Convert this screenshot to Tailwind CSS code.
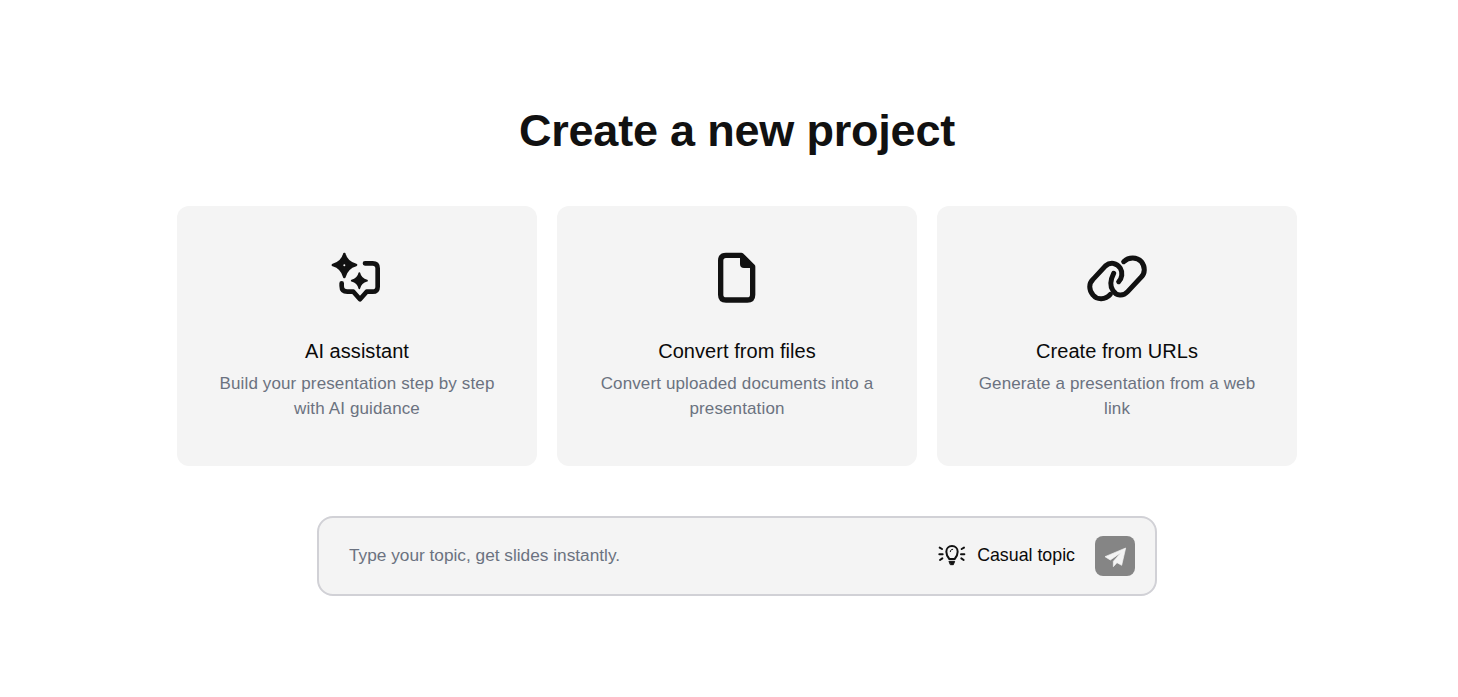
<!DOCTYPE html>
<html lang="en">
<head>
    <meta charset="UTF-8">
    <meta name="viewport" content="width=device-width, initial-scale=1.0">
    <title>Create a new project</title>
    <script src="https://cdn.jsdelivr.net/npm/@tailwindcss/browser@4"></script>
</head>
<body class="bg-white font-['Liberation_Sans',Arial,sans-serif]">
<main class="h-[697px] pl-4 flex flex-col items-center pt-[100px]">
    <h1 class="text-[45px] leading-[62px] tracking-[-0.2px] font-bold text-[#111111]">Create a new project</h1>

    <!-- Cards -->
    <div class="grid grid-cols-3 gap-5 w-[1120px] mt-[44px]">
        <div class="h-[260px] bg-[#f4f4f4] rounded-xl flex flex-col items-center pt-[40px] px-10 text-center">
            <svg class="w-[60px] h-[60px]" viewBox="21 18 180 180" fill="none">
                <path d="M73 42Q79 67 108 75Q80 83 73 111Q66 83 39 75Q67 67 73 42Z" fill="#111111" stroke="#111111" stroke-width="8" stroke-linejoin="round"/>
                <circle cx="73" cy="76" r="3" fill="#f4f4f4"/>
                <path d="M118 99Q122 117 141 122Q122 127 118 145Q114 127 95 122Q114 117 118 99Z" fill="#111111" stroke="#111111" stroke-width="5" stroke-linejoin="round"/>
                <path d="M135 70H158Q173 70 173 85V140Q173 155 158 155H140L120 178L100 155H82Q65 155 65 138V130" stroke="#111111" stroke-width="14" stroke-linecap="round" stroke-linejoin="round"/>
            </svg>
            <h2 class="mt-[30px] text-[20px] leading-[30px] tracking-[0.05px] text-[#0a0a0a]">AI assistant</h2>
            <p class="mt-[5px] text-[17px] leading-[25px] tracking-[0.13px] text-[#6b7280]">Build your presentation step by step with AI guidance</p>
        </div>
        <div class="h-[260px] bg-[#f4f4f4] rounded-xl flex flex-col items-center pt-[40px] px-10 text-center">
            <svg class="w-[60px] h-[60px]" viewBox="21 18 180 180" fill="none">
                <path d="M78 46H124L158 80V164Q158 180 142 180H78Q62 180 62 164V62Q62 46 78 46Z" stroke="#111111" stroke-width="16" stroke-linejoin="round"/>
                <path d="M120 40L165 84H132Q120 84 120 72Z" fill="#111111"/>
            </svg>
            <h2 class="mt-[30px] text-[20px] leading-[30px] tracking-[0.05px] text-[#0a0a0a]">Convert from files</h2>
            <p class="mt-[5px] text-[17px] leading-[25px] tracking-[0.13px] text-[#6b7280]">Convert uploaded documents into a presentation</p>
        </div>
        <div class="h-[260px] bg-[#f4f4f4] rounded-xl flex flex-col items-center pt-[40px] px-10 text-center">
            <svg class="w-[60px] h-[60px]" viewBox="30 18 180 180" fill="none" stroke="#111111" stroke-width="15" stroke-linecap="round">
                <path d="M100 163C85 180 60 180 48 165C35 150 35 130 48 118L85 78C100 65 120 68 130 85C138 98 135 115 125 125"/>
                <path d="M140 65C155 50 180 50 193 65C205 80 205 100 192 112L152 155C138 170 118 168 108 152C98 138 100 120 110 100"/>
            </svg>
            <h2 class="mt-[30px] text-[20px] leading-[30px] tracking-[0.05px] text-[#0a0a0a]">Create from URLs</h2>
            <p class="mt-[5px] text-[17px] leading-[25px] tracking-[0.13px] text-[#6b7280]">Generate a presentation from a web link</p>
        </div>
    </div>

    <!-- Prompt box -->
    <div class="w-[840px] h-[80px] mt-[50px] bg-[#f4f4f4] border-2 border-[#d1d1d6] rounded-2xl flex items-center pl-[30px] pr-5">
        <span class="flex-1 text-[17.25px] text-[#6b7280]">Type your topic, get slides instantly.</span>
        <svg class="w-[34px] h-[30px]" viewBox="0 3 102 90" fill="none" stroke="#111111" stroke-linecap="round" stroke-linejoin="round">
            <path d="M43 57C38 51 34 45 34 35C34 25 41 18 51 18C61 18 68 25 68 35C68 45 64 51 59 57Z" stroke-width="6"/>
            <path d="M46 35C46 30 49 28 53 28" stroke-width="3"/>
            <path d="M43 64H59L55 74H47Z" fill="#111111" stroke-width="3"/>
            <path d="M14 23L21 27M13 43H23M15 60L22 55M87 23L80 27M88 43H78M86 60L79 55" stroke-width="6"/>
        </svg>
        <span class="ml-[8px] mb-[2px] text-[17.8px] text-[#0a0a0a]">Casual topic</span>
        <div class="ml-5 w-10 h-10 rounded-lg bg-[#858585]">
            <svg class="w-10 h-10" viewBox="0 0 120 120" fill="#f4f4f4">
                <path d="M92 36L30 62L46 72L78 50L55 76V92L66 80L80 88Z" stroke="#f4f4f4" stroke-width="2" stroke-linejoin="round"/>
            </svg>
        </div>
    </div>
</main>
</body>
</html>
